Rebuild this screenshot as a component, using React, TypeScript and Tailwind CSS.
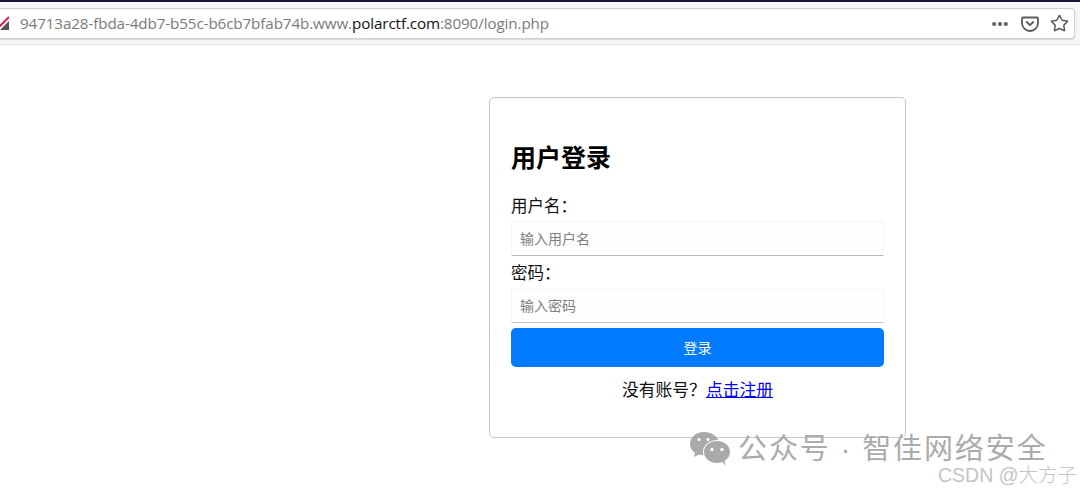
import { MoreHorizontal, Star } from 'lucide-react';

const cjk = "font-['Liberation_Sans','Noto_Sans_CJK_SC',sans-serif]";

function BrowserBar() {
  return (
    <div className="h-[45px] bg-[#f6f6f6] border-b border-[#e4e4e4]">
      <div className="h-[2px] bg-[#1d1440]" />
      <div className="pt-[6px] pr-[5px]">
        <div className="h-[31px] flex items-center justify-between bg-white border-y border-r border-[#cfcfcf] rounded-r-sm shadow-[0_1px_1px_rgba(0,0,0,0.12)]">
          <div className="flex items-center">
            <svg width="10" height="15" viewBox="0 0 10 15" className="mr-[10px]">
              <path d="M0 14 L9 5 V14 Z" fill="#555" />
              <path d="M-1 11 L9 1" stroke="#d7264f" strokeWidth="2" />
            </svg>
            <span className="font-['Open_Sans',sans-serif] text-[15.200px] text-[#7a7a7a] tracking-[-0.1px]">
              94713a28-fbda-4db7-b55c-b6cb7bfab74b.www.<span className="text-[#111]">polarctf.com</span>:8090/login.php
            </span>
          </div>
          <div className="flex items-center gap-[11px] pr-[5px] text-[#5a5a5a]">
            <MoreHorizontal size={20} strokeWidth={3} className="ml-[1px]" />
            <svg width="18" height="18" viewBox="0 0 18 18" fill="none" stroke="currentColor" strokeWidth="1.8" strokeLinejoin="round" strokeLinecap="round">
              <path d="M2 2.5h14a1 1 0 0 1 1 1V8a8 8 0 0 1-16 0V3.5a1 1 0 0 1 1-1z" />
              <path d="M5.8 7l3.2 3.2L12.2 7" />
            </svg>
            <Star size={19} strokeWidth={1.9} />
          </div>
        </div>
      </div>
    </div>
  );
}

function Watermark() {
  return (
    <div className="absolute left-[689px] top-[431px] w-[391px] h-[62px]">
      <div className="flex items-center">
        <svg width="42" height="36" viewBox="0 0 42 36" className="shrink-0">
          <path d="M15 1C7 1 1 6.500 1 13c0 3.700 2 6.800 5 9l-1 4 5-2.500c1.500.5 3 .7 4.500.7C14 23 14 22 14 21c0-7 6.500-12 14-12h1C27.500 4.500 21.800 1 15 1z" fill="#a9a9a9" />
          <ellipse cx="28" cy="21" rx="13" ry="11" fill="#a9a9a9" />
          <path d="M33 30l3.500 5-1-6z" fill="#a9a9a9" />
          <circle cx="10" cy="8.500" r="1.500" fill="#fff" />
          <circle cx="19" cy="8.500" r="1.500" fill="#fff" />
          <circle cx="23" cy="18.500" r="1.700" fill="#fff" />
          <circle cx="33" cy="18.500" r="1.700" fill="#fff" />
        </svg>
        <span className={`${cjk} ml-[7px] text-[29px] leading-[36px] text-[#ababab] tracking-[1.900px] whitespace-nowrap`}>
          公众号 · 智佳网络安全
        </span>
      </div>
      <div className={`${cjk} text-right pr-[3px] mt-[-4px] text-[19.500px] leading-[24px] text-[#c4c4c4] font-light whitespace-nowrap`}>
        CSDN @大方子
      </div>
    </div>
  );
}

export default function App() {
  return (
    <div className={`relative h-[493px] w-[1080px] overflow-hidden bg-white ${cjk}`}>
      <BrowserBar />

      <div className="pl-[489px] pt-[52px]">
        <div className="w-[417px] h-[341px] border border-[#c8c8c8] rounded-[5px] px-[21px] pt-[42px] bg-white">
          <h1 className="text-[25px] leading-[36px] font-bold text-black">用户登录</h1>

          <label className="block mt-[18px] text-[16.500px] leading-[24px] text-[#111]">用户名：</label>
          <input
            placeholder="输入用户名"
            className="mt-[3px] block w-full h-[35px] px-[8px] text-[14px] bg-[#fefefe] border border-[#f5f5f5] border-b-[#b9b9b9] outline-none placeholder:text-[#808080]"
          />

          <label className="block mt-[5px] text-[16.500px] leading-[24px] text-[#111]">密码：</label>
          <input
            placeholder="输入密码"
            className="mt-[4px] block w-full h-[34px] px-[8px] text-[14px] bg-[#fefefe] border border-[#f5f5f5] border-b-[#c4c4c4] outline-none placeholder:text-[#808080]"
          />

          <button className="mt-[5px] block w-full h-[39px] pt-[1px] rounded-[5px] bg-[#007bff] text-white text-[14px]">登录</button>

          <p className="mt-[12px] text-center text-[16.800px] leading-[24px] text-[#111]">
            没有账号？<a href="#" className="text-[#0000ee] underline">点击注册</a>
          </p>
        </div>
      </div>

      <Watermark />
    </div>
  );
}
